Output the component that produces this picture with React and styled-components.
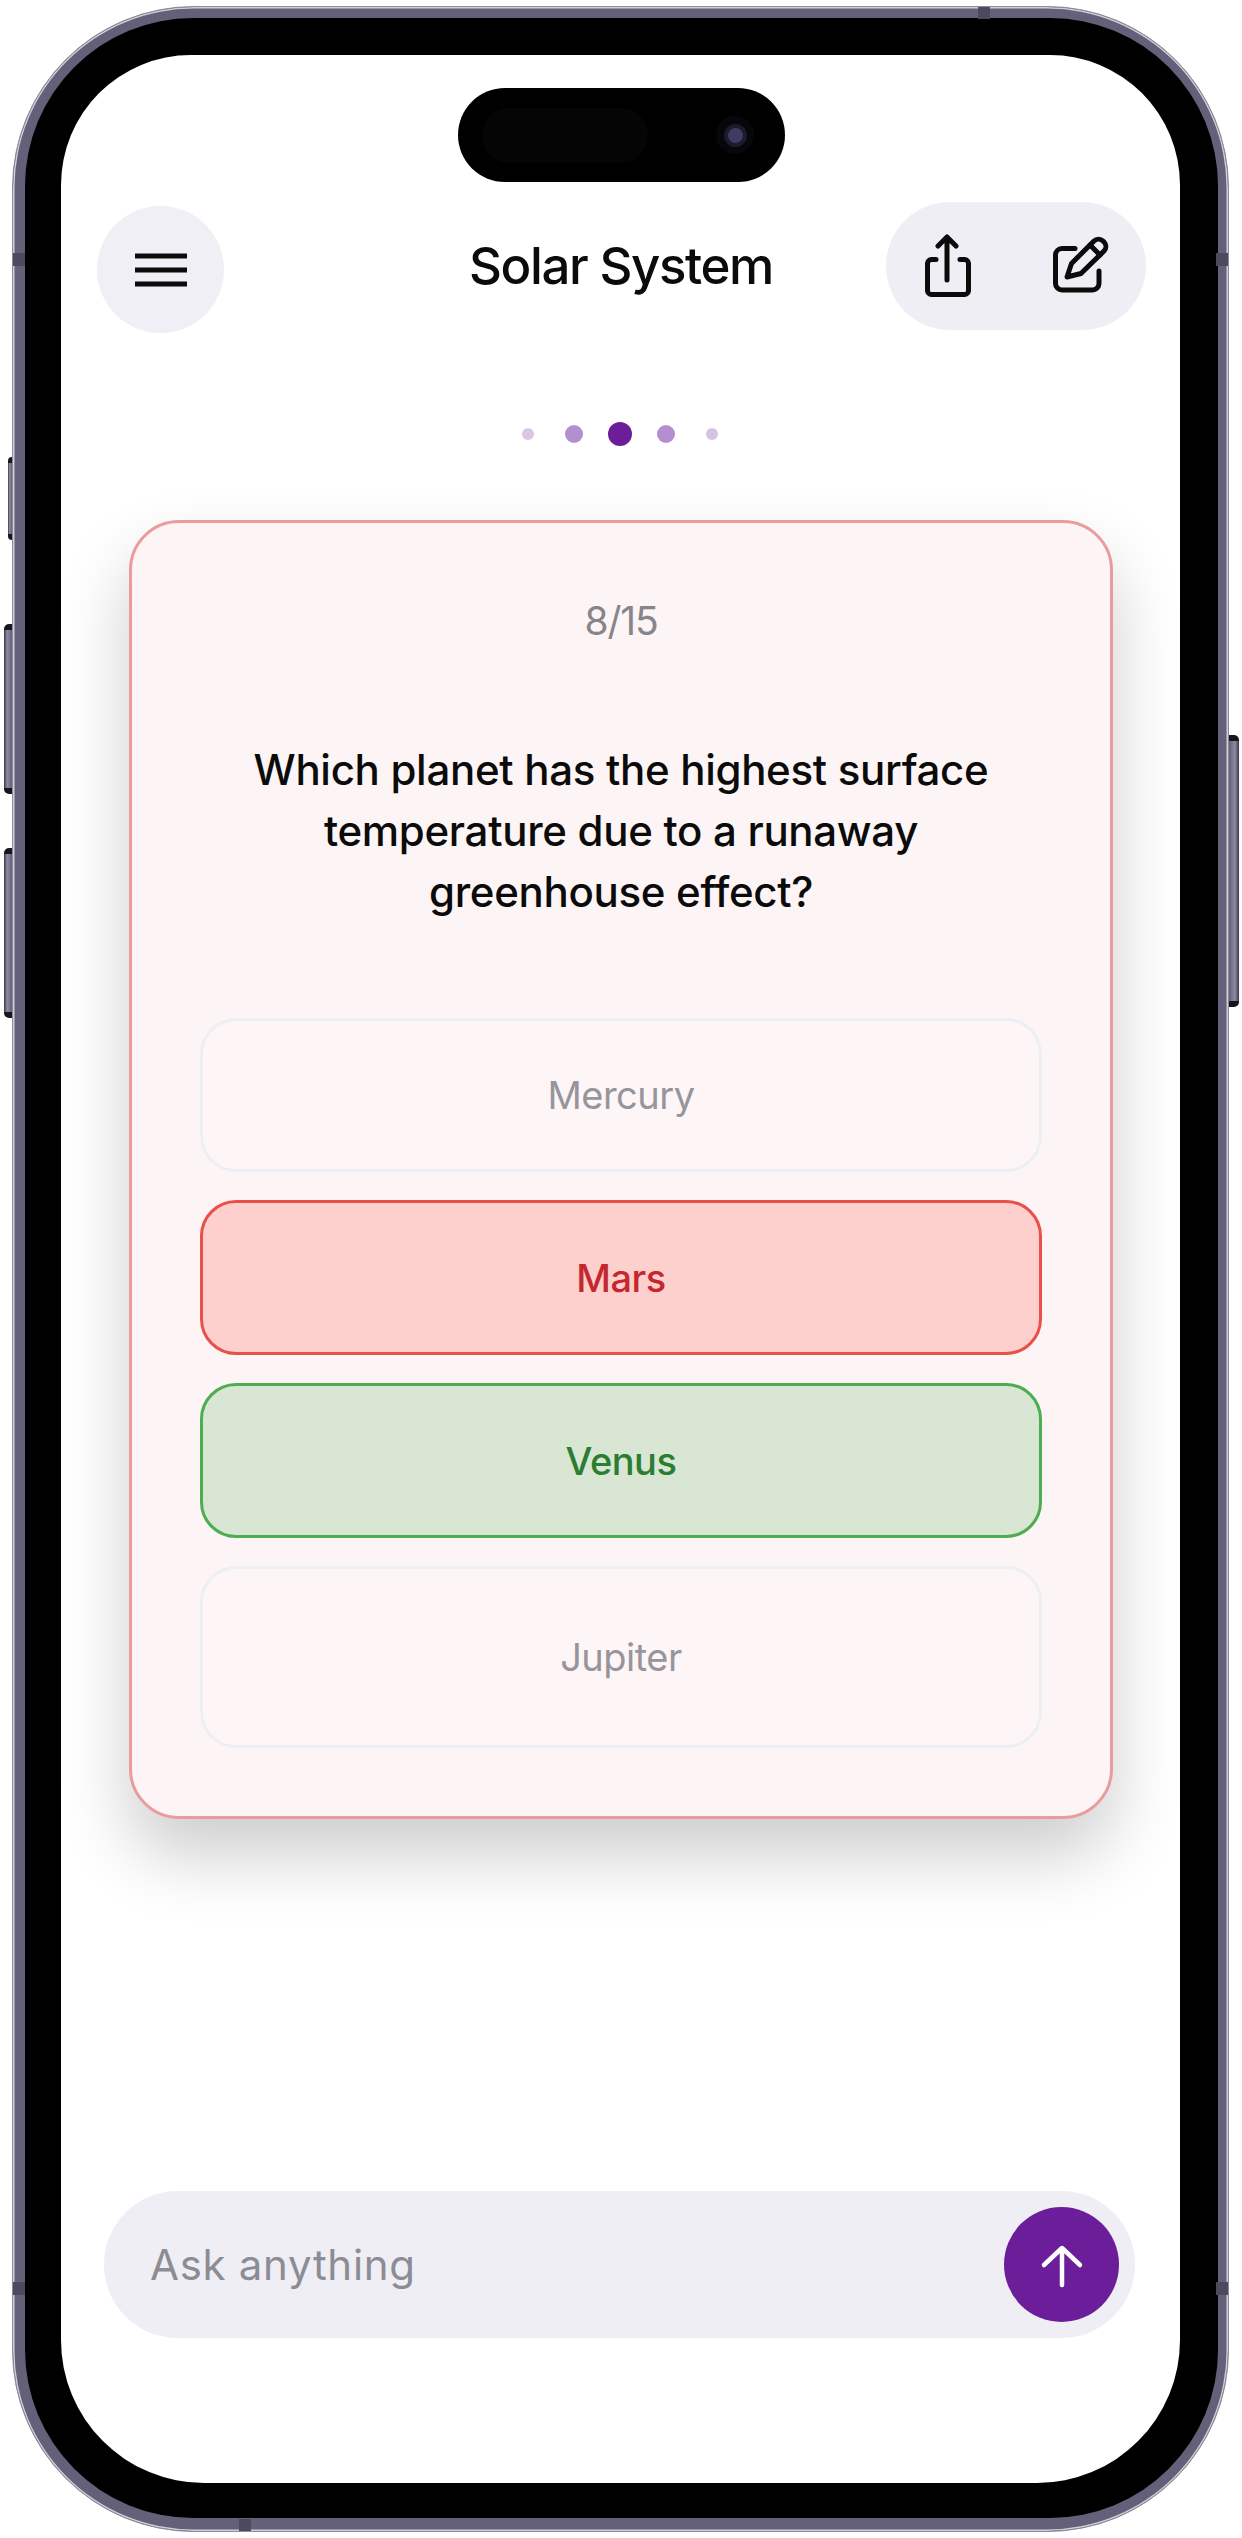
import styled, { createGlobalStyle } from "styled-components";

const GlobalStyle = createGlobalStyle`
  html, body {
    margin: 0;
    padding: 0;
    width: 1242px;
    height: 2538px;
    background: #fff;
    overflow: hidden;
    font-family: "Inter", "Liberation Sans", sans-serif;
  }
  * { box-sizing: border-box; }
`;

const Frame = styled.div`
  position: relative;
  width: 1217px;
  height: 2526px;
  margin: 6px 0 0 12px;
  padding: 11px 10px 13px 12px;
  background: #65607a;
  border: 1px solid #8d8b98;
  border-radius: 182px;
  box-shadow: inset 0 0 0 1.5px #cfced8;
`;

const SideButton = styled.div`
  position: absolute;
  top: ${p => p.$top}px;
  height: ${p => p.$height}px;
  width: ${p => p.$width}px;
  ${p => (p.$right ? "right" : "left")}: -${p => p.$width + 1}px;
  background: linear-gradient(${p => (p.$right ? "90deg" : "270deg")}, #65607a, #8f8ba3 60%, #3a3745);
  border-radius: ${p => (p.$right ? "0 5px 5px 0" : "5px 0 0 5px")};
  border-top: 6px solid #17161c;
  border-bottom: 6px solid #17161c;
`;

const AntennaBand = styled.div`
  position: absolute;
  background: #4e4a5e;
  ${p => p.$vertical ? `
    left: ${p.$left}px;
    width: 12px;
    height: 12px;
    ${p.$bottom ? "bottom: 0;" : "top: 0;"}
  ` : `
    top: ${p.$top}px;
    width: 12px;
    height: 13px;
    ${p.$right ? "right: 0;" : "left: 0;"}
  `}
`;

const Bezel = styled.div`
  width: 100%;
  height: 100%;
  padding: 37px 38px 35px 36px;
  background: #000;
  border-radius: 168px;
`;

const Screen = styled.div`
  display: flex;
  flex-direction: column;
  width: 100%;
  height: 100%;
  padding: 33px 32px 145px 36px;
  background: #fff;
  border-radius: 130px 130px 143px 143px;
  overflow: hidden;
`;

const Island = styled.div`
  display: flex;
  align-items: center;
  justify-content: space-between;
  flex: none;
  align-self: center;
  width: 327px;
  height: 94px;
  margin-right: 2px;
  padding: 0 31px 0 24px;
  background: #000;
  border-radius: 47px;
`;

const Sensor = styled.div`
  width: 166px;
  height: 55px;
  background: #050505;
  border-radius: 28px;
`;

const Lens = styled.div`
  display: flex;
  align-items: center;
  justify-content: center;
  width: 38px;
  height: 38px;
  background: #07070b;
  border-radius: 50%;

  &::after {
    content: "";
    width: 15px;
    height: 15px;
    border-radius: 50%;
    background: #3f3c63;
    border: 4px solid #1c1b2b;
  }
`;

const Header = styled.header`
  display: grid;
  grid-template-columns: 1fr auto 1fr;
  align-items: start;
  flex: none;
  height: 130px;
  margin-top: 20px;
`;

const MenuButton = styled.button`
  display: flex;
  align-items: center;
  justify-content: center;
  width: 127px;
  height: 127px;
  margin-top: 4px;
  padding: 0;
  border: 0;
  border-radius: 50%;
  background: #efeff5;
`;

const Title = styled.h1`
  margin: 32px 3px 0 0;
  font-size: 51px;
  line-height: 64px;
  font-weight: 500;
  letter-spacing: -1.4px;
  color: #0b0b0b;
`;

const ActionPill = styled.div`
  display: flex;
  align-items: center;
  justify-self: end;
  gap: 76px;
  width: 260px;
  height: 128px;
  margin-right: 2px;
  padding: 0 32px 0 36px;
  border-radius: 64px;
  background: #eeeef4;
`;

const Dots = styled.div`
  display: grid;
  grid-template-columns: repeat(5, 46px);
  justify-items: center;
  align-items: center;
  flex: none;
  align-self: center;
  height: 24px;
  margin: 90px 5px 0 0;
`;

const Dot = styled.span`
  width: ${p => p.$size}px;
  height: ${p => p.$size}px;
  border-radius: 50%;
  background: ${p => p.$color};
`;

const Card = styled.section`
  flex: none;
  width: 984px;
  margin: 74px 0 0 32px;
  padding: 76px 68px 68px;
  background: #fdf4f5;
  border: 3px solid #e99b9e;
  border-radius: 50px;
  box-shadow: 0 36px 70px rgba(0, 0, 0, 0.2);
`;

const Counter = styled.div`
  font-size: 39px;
  line-height: 44px;
  font-weight: 400;
  letter-spacing: -1.2px;
  text-align: center;
  color: #86858a;
`;

const Question = styled.h2`
  margin: 96px 0 96px;
  font-size: 42px;
  line-height: 61px;
  font-weight: 500;
  letter-spacing: -0.3px;
  text-align: center;
  color: #0b0b0b;
`;

const Options = styled.div`
  display: flex;
  flex-direction: column;
  gap: 28px;
`;

const optionColors = {
  idle: { bg: "#fef5f6", line: "#ecf0f5", text: "#97959b", weight: 400 },
  wrong: { bg: "#fdd0cd", line: "#e9504a", text: "#c4282e", weight: 500 },
  right: { bg: "#d9e6d3", line: "#4cae50", text: "#2b7d30", weight: 500 },
};

const Option = styled.div`
  display: flex;
  align-items: center;
  justify-content: center;
  height: ${p => p.$height}px;
  border: 3px solid ${p => optionColors[p.$state].line};
  border-radius: 36px;
  background: ${p => optionColors[p.$state].bg};
  font-size: 38px;
  font-weight: ${p => optionColors[p.$state].weight};
  letter-spacing: -0.5px;
  color: ${p => optionColors[p.$state].text};
`;

const InputBar = styled.div`
  display: flex;
  align-items: center;
  justify-content: space-between;
  flex: none;
  width: 1031px;
  height: 147px;
  margin: auto 0 0 7px;
  padding: 0 16px 0 46px;
  border-radius: 74px;
  background: #eeeef4;
`;

const Placeholder = styled.span`
  font-size: 42px;
  font-weight: 400;
  letter-spacing: 0.7px;
  color: #8c8c94;
`;

const SendButton = styled.button`
  display: flex;
  align-items: center;
  justify-content: center;
  width: 115px;
  height: 115px;
  padding: 0;
  border: 0;
  border-radius: 50%;
  background: #6c1d99;
`;

const MenuIcon = () => (
  <svg width="52" height="34" viewBox="0 0 52 34" fill="none" stroke="#0b0b0b" strokeWidth="5">
    <path d="M0 3h52M0 17h52M0 31h52" />
  </svg>
);

const ShareIcon = () => (
  <svg width="52" height="68" viewBox="0 0 52 68" fill="none" stroke="#0b0b0b" strokeWidth="5" strokeLinecap="round" strokeLinejoin="round">
    <path d="M25 5v43M16 14l9-9 9 9" />
    <path d="M14 27.5H9.5a4 4 0 0 0-4 4v27a4 4 0 0 0 4 4h33a4 4 0 0 0 4-4v-27a4 4 0 0 0-4-4H38" />
  </svg>
);

const EditIcon = () => (
  <svg width="64" height="64" viewBox="0 0 64 64" fill="none" stroke="#0b0b0b" strokeWidth="5" strokeLinecap="round" strokeLinejoin="round">
    <path d="M25 14.5H12A6.500 6.500 0 0 0 5.500 21v28.500A6.500 6.500 0 0 0 12 56h30.500a6.500 6.500 0 0 0 6.500-6.500V37" />
    <path d="M17 43l4.500-13.500L44 7a6.400 6.400 0 0 1 9 0l1 1a6.400 6.400 0 0 1 0 9L31 39.500Z" />
    <path d="M40 11l10 10" />
  </svg>
);

const ArrowUpIcon = () => (
  <svg width="44" height="46" viewBox="0 0 44 46" fill="none" stroke="#fff" strokeWidth="4.5" strokeLinecap="round" strokeLinejoin="round">
    <path d="M22 43V6M4 23L22 6l18 17" />
  </svg>
);

const dots = [
  { size: 12, color: "#dcc6e6" },
  { size: 18, color: "#b48fd0" },
  { size: 24, color: "#6c1d99" },
  { size: 18, color: "#b48fd0" },
  { size: 12, color: "#d5c3e3" },
];

const options = [
  { label: "Mercury", state: "idle", height: 154 },
  { label: "Mars", state: "wrong", height: 155 },
  { label: "Venus", state: "right", height: 155 },
  { label: "Jupiter", state: "idle", height: 182 },
];

const App = () => (
  <>
    <GlobalStyle />
    <Frame>
      <SideButton $top={450} $height={83} $width={4} />
      <SideButton $top={617} $height={170} $width={8} />
      <SideButton $top={841} $height={170} $width={8} />
      <SideButton $right $top={728} $height={272} $width={10} />
      <AntennaBand $top={246} />
      <AntennaBand $top={246} $right />
      <AntennaBand $top={2275} />
      <AntennaBand $top={2275} $right />
      <AntennaBand $vertical $left={965} />
      <AntennaBand $vertical $bottom $left={226} />

      <Bezel>
        <Screen>
          <Island>
            <Sensor />
            <Lens />
          </Island>

          <Header>
            <MenuButton aria-label="Menu">
              <MenuIcon />
            </MenuButton>
            <Title>Solar System</Title>
            <ActionPill>
              <ShareIcon />
              <EditIcon />
            </ActionPill>
          </Header>

          <Dots>
            {dots.map((dot, index) => (
              <Dot key={index} $size={dot.size} $color={dot.color} />
            ))}
          </Dots>

          <Card>
            <Counter>8/15</Counter>
            <Question>
              Which planet has the highest surface
              <br />
              temperature due to a runaway
              <br />
              greenhouse effect?
            </Question>
            <Options>
              {options.map(option => (
                <Option key={option.label} $state={option.state} $height={option.height}>
                  {option.label}
                </Option>
              ))}
            </Options>
          </Card>

          <InputBar>
            <Placeholder>Ask anything</Placeholder>
            <SendButton aria-label="Send">
              <ArrowUpIcon />
            </SendButton>
          </InputBar>
        </Screen>
      </Bezel>
    </Frame>
  </>
);

export default App;
